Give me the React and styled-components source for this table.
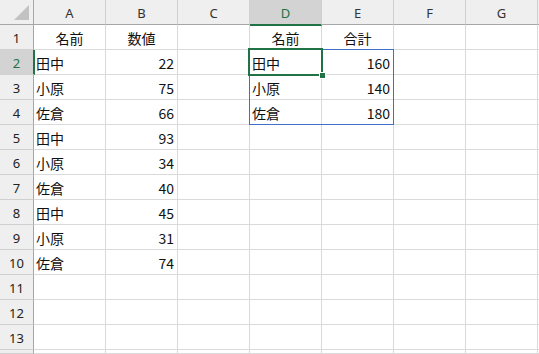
import React from "react";
import styled, { createGlobalStyle, css } from "styled-components";

const Global = createGlobalStyle`
  html, body { margin: 0; padding: 0; background: #fff; overflow: hidden; }
  body { font-family: "Noto Sans CJK JP", "Noto Sans", sans-serif; }
`;

const GRID = "#dadada";
const HEAD_BG = "#efefef";
const HEAD_LINE = "#d0d0d0";
const HEAD_EDGE = "#a6a6a6";
const GREEN = "#217346";
const SEL_BG = "#d3d3d3";

const Sheet = styled.div`
  display: grid;
  grid-template-columns: 34px repeat(7, 72px) 1fr;
  grid-template-rows: 25px repeat(13, 25px) 1fr;
  width: 539px;
  height: 354px;
  overflow: hidden;
`;

// every grid child sits at an explicit track so the overlays don't disturb flow
const at = css`
  grid-row: ${(p) => p.$r};
  grid-column: ${(p) => p.$c};
`;

const Corner = styled.div`
  grid-row: 1;
  grid-column: 1;
  position: relative;
  background: ${HEAD_BG};
  border-right: 1px solid ${HEAD_EDGE};
  border-bottom: 1px solid ${HEAD_EDGE};
  &::after {
    content: "";
    position: absolute;
    right: 4px;
    bottom: 4px;
    width: 0;
    height: 0;
    border-left: 15px solid transparent;
    border-bottom: 15px solid #c2c2c2;
  }
`;

const ColHead = styled.div`
  ${at};
  display: flex;
  align-items: center;
  justify-content: center;
  background: ${(p) => (p.$active ? SEL_BG : HEAD_BG)};
  color: ${(p) => (p.$active ? GREEN : "#333")};
  border-right: 1px solid ${HEAD_LINE};
  border-bottom: ${(p) => (p.$active ? `2px solid ${GREEN}` : `1px solid ${HEAD_EDGE}`)};
  margin-bottom: ${(p) => (p.$active ? "-1px" : "0")};
  font-family: "Noto Sans", "Liberation Sans", sans-serif;
  font-size: 13px;
  padding-top: 1px;
  box-sizing: border-box;
  z-index: ${(p) => (p.$active ? 1 : 0)};
`;

const RowHead = styled.div`
  ${at};
  display: flex;
  align-items: center;
  justify-content: center;
  background: ${(p) => (p.$active ? SEL_BG : HEAD_BG)};
  color: ${(p) => (p.$active ? GREEN : "#222")};
  border-bottom: 1px solid ${HEAD_LINE};
  border-right: ${(p) => (p.$active ? `2px solid ${GREEN}` : `1px solid ${HEAD_EDGE}`)};
  margin-right: ${(p) => (p.$active ? "-1px" : "0")};
  font-family: "Noto Sans", "Liberation Sans", sans-serif;
  font-size: 13px;
  padding-top: 1px;
  box-sizing: border-box;
  z-index: ${(p) => (p.$active ? 1 : 0)};
`;

const Cell = styled.div`
  ${at};
  display: flex;
  align-items: center;
  border-right: 1px solid ${GRID};
  border-bottom: 1px solid ${GRID};
  font-size: 14px;
  color: #111;
  padding: 1px 3px 0 2px;
  white-space: nowrap;
  overflow: hidden;
  ${(p) =>
    p.$align === "right" &&
    css`
      justify-content: flex-end;
    `}
  ${(p) =>
    p.$align === "center" &&
    css`
      justify-content: center;
      padding-left: 3px;
    `}
`;

const Range = styled.div`
  grid-column: 5 / span 2;
  grid-row: 3 / span 3;
  margin: -1px 0 0 -1px;
  border: 1px solid #3f6fc6;
  pointer-events: none;
  z-index: 2;
`;

const Selection = styled.div`
  grid-column: 5;
  grid-row: 3;
  position: relative;
  margin: -2px -1px -1px -2px;
  border: 2px solid ${GREEN};
  pointer-events: none;
  z-index: 3;
`;

const Handle = styled.span`
  position: absolute;
  right: -5px;
  bottom: -5px;
  width: 5px;
  height: 5px;
  background: ${GREEN};
  border: 1px solid #fff;
`;

const cols = ["A", "B", "C", "D", "E", "F", "G", ""];

// sheet content keyed by column index (0 = A)
const rows = [
  [
    { v: "名前", a: "center" },
    { v: "数値", a: "center" },
    null,
    { v: "名前", a: "center" },
    { v: "合計", a: "center" },
  ],
  [{ v: "田中" }, { v: "22", a: "right" }, null, { v: "田中" }, { v: "160", a: "right" }],
  [{ v: "小原" }, { v: "75", a: "right" }, null, { v: "小原" }, { v: "140", a: "right" }],
  [{ v: "佐倉" }, { v: "66", a: "right" }, null, { v: "佐倉" }, { v: "180", a: "right" }],
  [{ v: "田中" }, { v: "93", a: "right" }],
  [{ v: "小原" }, { v: "34", a: "right" }],
  [{ v: "佐倉" }, { v: "40", a: "right" }],
  [{ v: "田中" }, { v: "45", a: "right" }],
  [{ v: "小原" }, { v: "31", a: "right" }],
  [{ v: "佐倉" }, { v: "74", a: "right" }],
  [],
  [],
  [],
  [],
];

export default function App() {
  return (
    <>
      <Global />
      <Sheet>
        <Corner />
        {cols.map((c, i) => (
          <ColHead key={"h" + i} $r={1} $c={i + 2} $active={c === "D"}>
            {c}
          </ColHead>
        ))}
        {rows.map((r, ri) => (
          <React.Fragment key={"r" + ri}>
            <RowHead $r={ri + 2} $c={1} $active={ri === 1}>
              {ri < 13 ? ri + 1 : ""}
            </RowHead>
            {cols.map((_, ci) => {
              const c = r[ci];
              return (
                <Cell key={ci} $r={ri + 2} $c={ci + 2} $align={c && c.a}>
                  {c ? c.v : ""}
                </Cell>
              );
            })}
          </React.Fragment>
        ))}
        <Range />
        <Selection>
          <Handle />
        </Selection>
      </Sheet>
    </>
  );
}
